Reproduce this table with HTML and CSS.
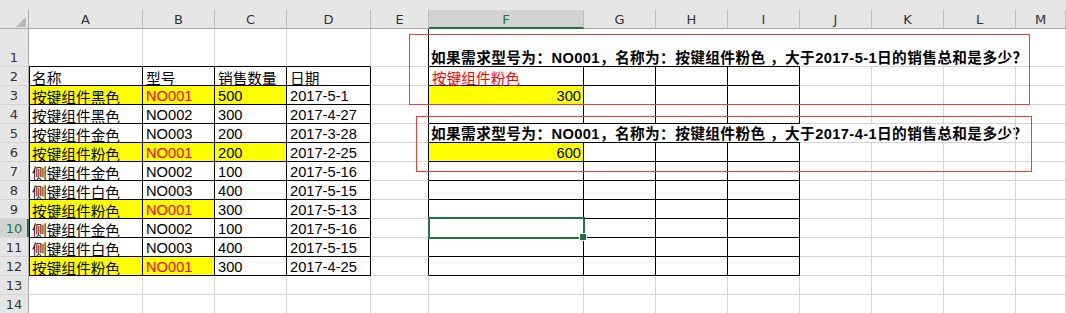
FILE: index.html
```html
<!DOCTYPE html>
<html lang="zh-CN">
<head>
<meta charset="utf-8">
<title>Sheet</title>
<link rel="stylesheet" href="styles.css">
</head>
<body>
<div class="sheet">
  <!-- column headers -->
  <div class="ch"><div class="cl corner"><span class="tri"></span></div></div>
  <div class="ch"><div class="cl">A</div></div>
  <div class="ch"><div class="cl">B</div></div>
  <div class="ch"><div class="cl">C</div></div>
  <div class="ch"><div class="cl">D</div></div>
  <div class="ch"><div class="cl">E</div></div>
  <div class="ch sel"><div class="cl">F</div></div>
  <div class="ch"><div class="cl">G</div></div>
  <div class="ch"><div class="cl">H</div></div>
  <div class="ch"><div class="cl">I</div></div>
  <div class="ch"><div class="cl">J</div></div>
  <div class="ch"><div class="cl">K</div></div>
  <div class="ch"><div class="cl">L</div></div>
  <div class="ch"><div class="cl">M</div></div>

  <!-- row 1 -->
  <div class="rh t">1</div>
  <div class="c kb t"></div><div class="c kb t"></div><div class="c kb t"></div><div class="c kb t"></div>
  <div class="c kr t"></div>
  <div class="c kb nr t q">如果需求型号为：NO001，名称为：按键组件粉色 ，大于2017-5-1日的销售总和是多少？</div>
  <div class="c kb nr t"></div><div class="c kb nr t"></div><div class="c kb nr t"></div>
  <div class="c nr t"></div><div class="c nr t"></div><div class="c nr t"></div><div class="c t"></div>

  <!-- row 2 -->
  <div class="rh">2</div>
  <div class="c k kl zh">名称</div><div class="c k zh">型号</div><div class="c k zh">销售数量</div><div class="c k zh">日期</div>
  <div class="c kr"></div>
  <div class="c k red zh">按键组件粉色</div><div class="c k"></div><div class="c k"></div><div class="c k"></div>
  <div class="c"></div><div class="c"></div><div class="c"></div><div class="c"></div>

  <!-- row 3 -->
  <div class="rh">3</div>
  <div class="c k kl y zh">按键组件黑色</div><div class="c k y red">NO001</div><div class="c k y">500</div><div class="c k">2017-5-1</div>
  <div class="c kr"></div>
  <div class="c k y num">300</div><div class="c k"></div><div class="c k"></div><div class="c k"></div>
  <div class="c"></div><div class="c"></div><div class="c"></div><div class="c"></div>

  <!-- row 4 -->
  <div class="rh">4</div>
  <div class="c k kl zh">按键组件黑色</div><div class="c k">NO002</div><div class="c k">300</div><div class="c k">2017-4-27</div>
  <div class="c kr"></div>
  <div class="c k"></div><div class="c k"></div><div class="c k"></div><div class="c k"></div>
  <div class="c"></div><div class="c"></div><div class="c"></div><div class="c"></div>

  <!-- row 5 -->
  <div class="rh">5</div>
  <div class="c k kl zh">按键组件金色</div><div class="c k">NO003</div><div class="c k">200</div><div class="c k">2017-3-28</div>
  <div class="c kr"></div>
  <div class="c kb nr q">如果需求型号为：NO001，名称为：按键组件粉色 ，大于2017-4-1日的销售总和是多少？</div>
  <div class="c kb nr"></div><div class="c kb nr"></div><div class="c kb nr"></div>
  <div class="c nr"></div><div class="c nr"></div><div class="c"></div><div class="c"></div>

  <!-- row 6 -->
  <div class="rh">6</div>
  <div class="c k kl y zh">按键组件粉色</div><div class="c k y red">NO001</div><div class="c k y">200</div><div class="c k">2017-2-25</div>
  <div class="c kr"></div>
  <div class="c k y num">600</div><div class="c k"></div><div class="c k"></div><div class="c k"></div>
  <div class="c"></div><div class="c"></div><div class="c"></div><div class="c"></div>

  <!-- row 7 -->
  <div class="rh">7</div>
  <div class="c k kl zh">侧键组件金色</div><div class="c k">NO002</div><div class="c k">100</div><div class="c k">2017-5-16</div>
  <div class="c kr"></div>
  <div class="c k"></div><div class="c k"></div><div class="c k"></div><div class="c k"></div>
  <div class="c"></div><div class="c"></div><div class="c"></div><div class="c"></div>

  <!-- row 8 -->
  <div class="rh">8</div>
  <div class="c k kl zh">侧键组件白色</div><div class="c k">NO003</div><div class="c k">400</div><div class="c k">2017-5-15</div>
  <div class="c kr"></div>
  <div class="c k"></div><div class="c k"></div><div class="c k"></div><div class="c k"></div>
  <div class="c"></div><div class="c"></div><div class="c"></div><div class="c"></div>

  <!-- row 9 -->
  <div class="rh">9</div>
  <div class="c k kl y zh">按键组件粉色</div><div class="c k y red">NO001</div><div class="c k">300</div><div class="c k">2017-5-13</div>
  <div class="c kr"></div>
  <div class="c k"></div><div class="c k"></div><div class="c k"></div><div class="c k"></div>
  <div class="c"></div><div class="c"></div><div class="c"></div><div class="c"></div>

  <!-- row 10 -->
  <div class="rh sel">10</div>
  <div class="c k kl zh">侧键组件金色</div><div class="c k">NO002</div><div class="c k">100</div><div class="c k">2017-5-16</div>
  <div class="c kr"></div>
  <div class="c k"></div><div class="c k"></div><div class="c k"></div><div class="c k"></div>
  <div class="c"></div><div class="c"></div><div class="c"></div><div class="c"></div>

  <!-- row 11 -->
  <div class="rh">11</div>
  <div class="c k kl zh">侧键组件白色</div><div class="c k">NO003</div><div class="c k">400</div><div class="c k">2017-5-15</div>
  <div class="c kr"></div>
  <div class="c k"></div><div class="c k"></div><div class="c k"></div><div class="c k"></div>
  <div class="c"></div><div class="c"></div><div class="c"></div><div class="c"></div>

  <!-- row 12 -->
  <div class="rh">12</div>
  <div class="c k kl y zh">按键组件粉色</div><div class="c k y red">NO001</div><div class="c k">300</div><div class="c k">2017-4-25</div>
  <div class="c kr"></div>
  <div class="c k"></div><div class="c k"></div><div class="c k"></div><div class="c k"></div>
  <div class="c"></div><div class="c"></div><div class="c"></div><div class="c"></div>

  <!-- row 13 -->
  <div class="rh">13</div>
  <div class="c"></div><div class="c"></div><div class="c"></div><div class="c"></div><div class="c"></div>
  <div class="c"></div><div class="c"></div><div class="c"></div><div class="c"></div>
  <div class="c"></div><div class="c"></div><div class="c"></div><div class="c"></div>

  <!-- row 14 -->
  <div class="rh">14</div>
  <div class="c"></div><div class="c"></div><div class="c"></div><div class="c"></div><div class="c"></div>
  <div class="c"></div><div class="c"></div><div class="c"></div><div class="c"></div>
  <div class="c"></div><div class="c"></div><div class="c"></div><div class="c"></div>

  <!-- overlays -->
  <div class="mark mark-1"></div>
  <div class="mark mark-2"></div>
  <div class="cursor"></div>
  <div class="handle"></div>
</div>
</body>
</html>
```

FILE: styles.css
```css
html, body {
  margin: 0;
  padding: 0;
  background: #ffffff;
  overflow: hidden;
}

body {
  font-family: "Liberation Sans", "Noto Sans CJK SC", sans-serif;
  font-size: 14.67px;
  color: #000;
}

.sheet {
  position: relative;
  display: grid;
  grid-template-columns: 29px 114px 72px 72px 84px 58px 155px 72px 72px 72px 72px 72px 72px 50px;
  grid-template-rows: 29px 38px repeat(13, 19px);
  width: 1066px;
}

.sheet > div {
  box-sizing: border-box;
}

/* column headers */
.ch {
  background: #e6e6e6;
  padding-top: 10px;
  border-bottom: 1px solid #ababab;
}

.cl {
  box-sizing: border-box;
  height: 18px;
  padding-top: 1px;
  border-right: 1px solid #bdbdbd;
  font-family: "DejaVu Sans", sans-serif;
  font-size: 13px;
  line-height: 18px;
  text-align: center;
  color: #333;
}

.ch.sel {
  border-bottom-color: #217346;
}

.ch.sel .cl {
  background: #d2d2d2;
  color: #217346;
  box-shadow: inset 0 -1px 0 #217346;
}

.corner {
  display: flex;
  justify-content: flex-end;
  align-items: flex-end;
  padding: 0 2px 1px 0;
  border-right-color: #ababab;
}

.tri {
  width: 0;
  height: 0;
  border-left: 10px solid transparent;
  border-bottom: 10px solid #b9b9b9;
}

/* row headers */
.rh {
  background: #e6e6e6;
  border-right: 1px solid #ababab;
  border-bottom: 1px solid #d4d4d4;
  padding-top: 1px;
  font-family: "DejaVu Sans", sans-serif;
  font-size: 13px;
  line-height: 18px;
  text-align: center;
  color: #333;
}

.rh.sel {
  background: #d2d2d2;
  color: #217346;
  border-right-color: #217346;
  box-shadow: inset -1px 0 0 #217346;
}

/* cells */
.c {
  border-right: 1px solid #d4d4d4;
  border-bottom: 1px solid #d4d4d4;
  padding: 1px 3px 0 3px;
  line-height: 18px;
  white-space: nowrap;
  overflow: visible;
}

.zh {
  font-family: "Noto Sans CJK SC", "Liberation Sans", sans-serif;
  line-height: 17px;
  padding-top: 2px;
}

.t { padding-top: 20px; }

.k {
  border-right-color: #000;
  border-bottom-color: #000;
}

.kb { border-bottom-color: #000; }
.kr { border-right-color: #000; }
.nr { border-right: 0; }
.kl { box-shadow: inset 1px 0 0 #000; }

.y { background: #ffff00; }
.red { color: #ff0000; }
.num { text-align: right; padding-right: 2px; }
.q { font-weight: bold; padding-left: 2px; letter-spacing: 0.4px; }

/* overlays */
.mark {
  position: absolute;
  box-sizing: border-box;
  border: 1px solid #f03c3c;
  pointer-events: none;
}

.mark-1 {
  left: 409px;
  top: 34px;
  width: 621px;
  height: 71px;
}

.mark-2 {
  left: 416px;
  top: 116px;
  width: 616px;
  height: 56px;
}

.cursor {
  position: absolute;
  box-sizing: border-box;
  left: 428px;
  top: 217px;
  width: 157px;
  height: 22px;
  border: 2px solid #217346;
}

.handle {
  position: absolute;
  box-sizing: border-box;
  left: 579px;
  top: 233px;
  width: 8px;
  height: 8px;
  background: #217346;
  border: 1px solid #ffffff;
}
```
